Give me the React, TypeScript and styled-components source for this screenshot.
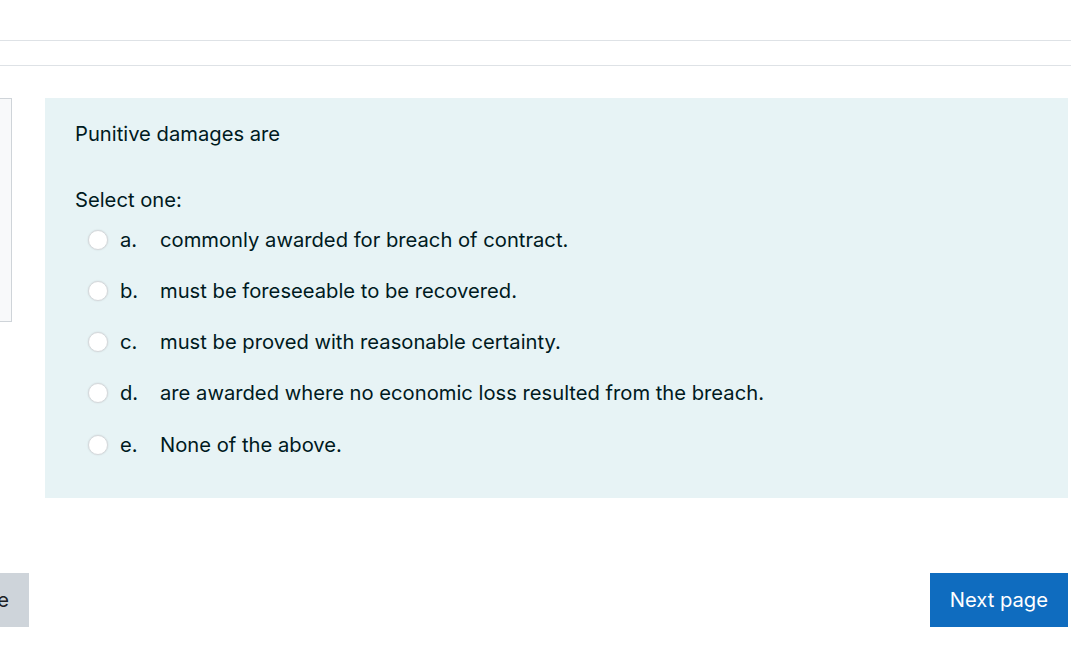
import React from "react";
import styled, { createGlobalStyle } from "styled-components";

const GlobalStyle = createGlobalStyle`
  html, body {
    margin: 0;
    padding: 0;
    background: #ffffff;
    font-family: Inter, "Noto Sans", "Liberation Sans", sans-serif;
    color: #1d2125;
    overflow: hidden;
  }
`;

const TopBar = styled.div`
  height: 40px;
  border-bottom: 1px solid #dee2e6;
`;

const SubBar = styled.div`
  height: 24px;
  border-bottom: 1px solid #dee2e6;
`;

const Page = styled.div`
  padding: 32px 3px 0 0;
  overflow: hidden;
`;

const QuestionRow = styled.div`
  display: flex;
  align-items: flex-start;
  gap: 33px;
  margin-left: -148px;
`;

const InfoBox = styled.div`
  flex: 0 0 160px;
  height: 224px;
  box-sizing: border-box;
  background: #f8f9fa;
  border: 1px solid #cfd4d9;
`;

const Formulation = styled.div`
  flex: 1;
  background: #e7f3f5;
  color: #001a1e;
  padding: 22px 30px 28px;
  font-size: 20.2px;
  line-height: 28px;
`;

const QText = styled.div`
  margin-bottom: 38px;
`;

const Prompt = styled.div``;

const Answer = styled.div`
  display: flex;
  flex-direction: column;
`;

const Option = styled.label`
  display: flex;
  align-items: center;
  height: 51.25px;
`;

const Radio = styled.span`
  width: 20px;
  height: 20px;
  border-radius: 50%;
  box-sizing: border-box;
  background: #ffffff;
  border: 1px solid #d6d9dc;
  box-shadow: 0 0 2px rgba(0, 0, 0, 0.12);
  margin-left: 13px;
`;

const Letter = styled.span`
  width: 40px;
  margin-left: 12px;
`;

const Nav = styled.div`
  display: flex;
  justify-content: space-between;
  margin-top: 75px;
`;

const Clip = styled.div`
  width: 29px;
  overflow: hidden;
  display: flex;
  justify-content: flex-end;
`;

const Button = styled.button<{ primary?: boolean }>`
  flex: none;
  font-family: inherit;
  font-size: 20.2px;
  line-height: 28px;
  padding: 13px 20px;
  border: none;
  border-radius: 0;
  white-space: nowrap;
  background: ${(p) => (p.primary ? "#0f6cbf" : "#ced4da")};
  color: ${(p) => (p.primary ? "#ffffff" : "#1d2125")};
`;

const options = [
  { key: "a.", text: "commonly awarded for breach of contract." },
  { key: "b.", text: "must be foreseeable to be recovered." },
  { key: "c.", text: "must be proved with reasonable certainty." },
  { key: "d.", text: "are awarded where no economic loss resulted from the breach." },
  { key: "e.", text: "None of the above." },
];

export default function App() {
  return (
    <>
      <GlobalStyle />
      <TopBar />
      <SubBar />
      <Page>
        <QuestionRow>
          <InfoBox />
          <Formulation>
            <QText>Punitive damages are</QText>
            <Prompt>Select one:</Prompt>
            <Answer>
              {options.map((o) => (
                <Option key={o.key}>
                  <Radio />
                  <Letter>{o.key}</Letter>
                  <span>{o.text}</span>
                </Option>
              ))}
            </Answer>
          </Formulation>
        </QuestionRow>
        <Nav>
          <Clip>
            <Button>Previous page</Button>
          </Clip>
          <Button primary>Next page</Button>
        </Nav>
      </Page>
    </>
  );
}
